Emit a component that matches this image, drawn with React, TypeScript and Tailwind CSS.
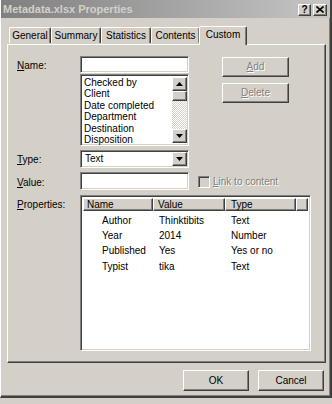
import React from 'react';

const raised =
  'bg-[#d4d0c8] border border-t-white border-l-white border-r-[#404040] border-b-[#404040] shadow-[inset_-1px_-1px_0_#808080]';
const sunken =
  'bg-white border border-t-[#808080] border-l-[#808080] border-r-white border-b-white shadow-[inset_1px_1px_0_#404040,inset_-1px_-1px_0_#d4d0c8]';
const disabledText = 'text-[#808080] [text-shadow:1px_1px_0_#ffffff]';

const Arrow = ({ up }: { up?: boolean }) => (
  <svg width="7" height="4" viewBox="0 0 7 4">
    <polygon points={up ? '3.5,0 7,4 0,4' : '0,0 7,0 3.5,4'} fill="#000" />
  </svg>
);

const Label = ({ k, rest, className = '' }: { k: string; rest: string; className?: string }) => (
  <span className={`w-[63px] shrink-0 ${className}`}>
    <span className="underline underline-offset-1">{k}</span>
    {rest}
  </span>
);

const tabs = [
  { name: 'General', w: 'w-[42px]' },
  { name: 'Summary', w: 'w-[50px]' },
  { name: 'Statistics', w: 'w-[50px]' },
  { name: 'Contents', w: 'w-[49px]' },
];

const listItems = ['Checked by', 'Client', 'Date completed', 'Department', 'Destination', 'Disposition'];

const rows = [
  ['Author', 'Thinktibits', 'Text'],
  ['Year', '2014', 'Number'],
  ['Published', 'Yes', 'Yes or no'],
  ['Typist', 'tika', 'Text'],
];

export default function App() {
  return (
    <div className="w-[332px] h-[404px] bg-[#d4d0c8] overflow-hidden font-['Liberation_Sans',Arial,sans-serif] text-[10px] text-black leading-none">
      <div className="w-[332px] h-[398px] flex flex-col border-r-2 border-b-2 border-r-[#404040] border-b-[#404040] border-l border-l-white shadow-[inset_-1px_-1px_0_#808080]">
        {/* Title bar */}
        <div className="h-[18px] flex items-center bg-gradient-to-r from-[#808080] to-[#c6c6c6] pl-[2px] pr-[3px]">
          <span className="font-bold text-[11px] text-[#d4d0c8] pt-[1px]">Metadata.xlsx Properties</span>
          <div className="ml-auto flex gap-[2px] pt-[1px]">
            <div className={`${raised} w-[13px] h-[12px] flex items-center justify-center text-[10px] font-bold`}>?</div>
            <div className={`${raised} w-[14px] h-[12px] flex items-center justify-center`}>
              <svg width="8" height="7" viewBox="0 0 8 7">
                <path d="M0.5 0.5 L7.5 6.5 M7.5 0.5 L0.5 6.5" stroke="#000" strokeWidth="1.6" />
              </svg>
            </div>
          </div>
        </div>

        {/* Tabs */}
        <div className="mt-[7px] h-[19px] flex items-end pl-[8px] relative z-10">
          {tabs.map((t) => (
            <div
              key={t.name}
              className={`${t.w} h-[16px] flex items-center justify-center border-t border-l border-t-white border-l-white border-r border-r-[#404040] shadow-[inset_-1px_0_0_#808080] rounded-t-[2px] mb-[1px]`}
            >
              {t.name}
            </div>
          ))}
          <div className="w-[48px] h-[19px] -ml-[1px] flex items-start justify-center pt-[3px] bg-[#d4d0c8] border-t border-l border-t-white border-l-white border-r border-r-[#404040] shadow-[inset_-1px_0_0_#808080] rounded-t-[2px] -mb-[1px]">
            Custom
          </div>
        </div>

        {/* Panel */}
        <div className="ml-[6px] w-[319px] h-[319px] border-t border-l border-t-white border-l-white border-r border-b border-r-[#404040] border-b-[#404040] shadow-[inset_-1px_-1px_0_#808080] pl-[9px] pt-[11px]">
          <div className="flex items-start">
            <div className="flex flex-col w-[172px]">
              <div className="flex items-center h-[17px]">
                <Label k="N" rest="ame:" className="pt-[3px]" />
                <div className={`${sunken} w-[109px] h-[17px]`} />
              </div>
              <div className="flex mt-[1px]">
                <span className="w-[63px] shrink-0" />
                <div className={`${sunken} w-[109px] h-[72px] flex p-[2px] pr-[1px]`}>
                  <div className="flex-1 flex flex-col pl-[1px] leading-[11.4px]">
                    {listItems.map((i) => (
                      <span key={i}>{i}</span>
                    ))}
                  </div>
                  <div className="w-[15px] flex flex-col">
                    <div className={`${raised} h-[14px] flex items-center justify-center`}>
                      <Arrow up />
                    </div>
                    <div className={`${raised} h-[10px]`} />
                    <div className="flex-1 bg-[repeating-conic-gradient(#ffffff_0_25%,#d4d0c8_0_50%)] bg-size-[2px_2px]" />
                    <div className={`${raised} h-[14px] flex items-center justify-center`}>
                      <Arrow />
                    </div>
                  </div>
                </div>
              </div>
              <div className="flex items-center h-[18px] mt-[4px]">
                <Label k="T" rest="ype:" className="pt-[1px]" />
                <div className={`${sunken} w-[109px] h-[18px] flex items-center p-[2px] pr-[1px]`}>
                  <span className="flex-1 pl-[2px]">Text</span>
                  <div className={`${raised} w-[15px] h-[14px] flex items-center justify-center`}>
                    <Arrow />
                  </div>
                </div>
              </div>
            </div>
            <div className="ml-[33px] flex flex-col mt-[1px]">
              <div className={`${raised} w-[67px] h-[20px] flex items-center justify-center ${disabledText}`}>
                <span>
                  <span className="underline underline-offset-1">A</span>dd
                </span>
              </div>
              <div className={`${raised} w-[67px] h-[20px] mt-[6px] flex items-center justify-center ${disabledText}`}>
                <span>
                  <span className="underline underline-offset-1">D</span>elete
                </span>
              </div>
            </div>
          </div>

          <div className="flex items-center h-[18px] mt-[4px]">
            <Label k="V" rest="alue:" className="pt-[4px]" />
            <div className={`${sunken} w-[109px] h-[18px]`} />
            <div className="ml-[9px] mt-[2px] w-[12px] h-[12px] bg-[#d4d0c8] border border-t-[#808080] border-l-[#808080] border-r-white border-b-white shadow-[inset_1px_1px_0_#404040]" />
            <span className={`ml-[3px] pt-[2px] ${disabledText}`}>
              <span className="underline underline-offset-1">L</span>ink to content
            </span>
          </div>

          <div className="flex mt-[5px]">
            <Label k="P" rest="roperties:" className="pt-[5px]" />
            <div className={`${sunken} w-[231px] h-[156px] p-[2px] flex flex-col overflow-hidden`}>
              <div className="flex h-[13px] shrink-0">
                <div className={`${raised} w-[70px] flex items-center pl-[3px]`}>Name</div>
                <div className={`${raised} w-[72px] flex items-center pl-[4px]`}>Value</div>
                <div className={`${raised} w-[71px] flex items-center pl-[5px]`}>Type</div>
                <div className={`${raised} flex-1`} />
              </div>
              <div className="flex flex-col pt-[2px]">
                {rows.map((r) => (
                  <div key={r[0]} className="flex h-[15.3px] items-center">
                    <span className="w-[70px] pl-[19px]">{r[0]}</span>
                    <span className="w-[72px] pl-[6px]">{r[1]}</span>
                    <span className="w-[71px] pl-[6px]">{r[2]}</span>
                  </div>
                ))}
              </div>
            </div>
          </div>
        </div>

        {/* Footer buttons */}
        <div className="flex justify-end gap-[9px] pr-[6px] mt-[7px]">
          <div className={`${raised} w-[66px] h-[21px] flex items-center justify-center`}>OK</div>
          <div className={`${raised} w-[66px] h-[21px] flex items-center justify-center`}>Cancel</div>
        </div>
      </div>
    </div>
  );
}
